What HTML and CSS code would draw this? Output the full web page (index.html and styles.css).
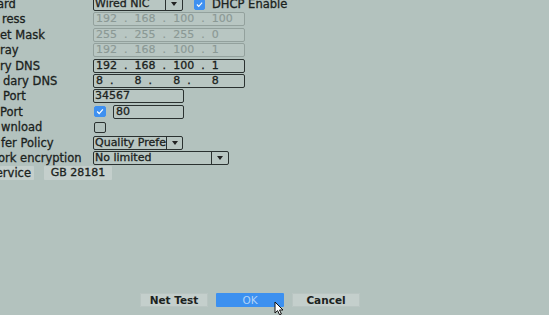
FILE: index.html
```html
<!DOCTYPE html>
<html>
<head>
<meta charset="utf-8">
<link rel="stylesheet" href="styles.css">
</head>
<body>
<div class="screen">
  <div class="form">
    <div class="row">
      <div class="label"><span class="lt off-3">ard</span></div>
      <div class="field">
        <div class="select w-nic"><span class="sel-text">Wired NIC</span><span class="sel-arrow"></span></div>
        <span class="check on dhcp"><svg viewBox="0 0 12 11"><path d="M2.5 5.5 L5 8 L9.5 3" /></svg></span>
        <span class="check-label">DHCP Enable</span>
      </div>
    </div>
    <div class="row">
      <div class="label"><span class="lt off2">ress</span></div>
      <div class="field">
        <div class="ip disabled"><span class="seg">192<i>.</i></span><span class="seg">168<i>.</i></span><span class="seg">100<i>.</i></span><span class="seg">100</span></div>
      </div>
    </div>
    <div class="row">
      <div class="label"><span class="lt">et Mask</span></div>
      <div class="field">
        <div class="ip disabled"><span class="seg">255<i>.</i></span><span class="seg">255<i>.</i></span><span class="seg">255<i>.</i></span><span class="seg">0</span></div>
      </div>
    </div>
    <div class="row">
      <div class="label"><span class="lt">ray</span></div>
      <div class="field">
        <div class="ip disabled"><span class="seg">192<i>.</i></span><span class="seg">168<i>.</i></span><span class="seg">100<i>.</i></span><span class="seg">1</span></div>
      </div>
    </div>
    <div class="row">
      <div class="label"><span class="lt">ry DNS</span></div>
      <div class="field">
        <div class="ip"><span class="seg">192<i>.</i></span><span class="seg">168<i>.</i></span><span class="seg">100<i>.</i></span><span class="seg">1</span></div>
      </div>
    </div>
    <div class="row">
      <div class="label"><span class="lt off3">dary DNS</span></div>
      <div class="field">
        <div class="ip"><span class="seg">8<i>.</i></span><span class="seg">8<i>.</i></span><span class="seg">8<i>.</i></span><span class="seg">8</span></div>
      </div>
    </div>
    <div class="row">
      <div class="label"><span class="lt off3">Port</span></div>
      <div class="field">
        <div class="input w-tcp">34567</div>
      </div>
    </div>
    <div class="row">
      <div class="label"><span class="lt">Port</span></div>
      <div class="field">
        <span class="check on"><svg viewBox="0 0 12 11"><path d="M2.5 5.5 L5 8 L9.5 3" /></svg></span>
        <div class="input w-http">80</div>
      </div>
    </div>
    <div class="row">
      <div class="label"><span class="lt off1">wnload</span></div>
      <div class="field">
        <span class="check"></span>
      </div>
    </div>
    <div class="row">
      <div class="label"><span class="lt off1">fer Policy</span></div>
      <div class="field">
        <div class="select w-policy"><span class="sel-text">Quality Preferred</span><span class="sel-arrow"></span></div>
      </div>
    </div>
    <div class="row">
      <div class="label"><span class="lt off-2">ork encryption</span></div>
      <div class="field">
        <div class="select w-enc"><span class="sel-text">No limited</span><span class="sel-arrow"></span></div>
      </div>
    </div>
    <div class="row svc-row">
      <span class="btn svc"><span>ervice</span></span>
      <span class="btn gb">GB 28181</span>
    </div>
  </div>
  <div class="actions">
    <span class="btn act">Net Test</span>
    <span class="btn act primary">OK</span>
    <span class="btn act">Cancel</span>
  </div>
  <svg class="cursor" viewBox="0 0 11 15" width="11" height="15"><path d="M1 1 L1 12 L3.6 9.6 L5.6 13.8 L7.4 13 L5.5 9 L9 9 Z" /></svg>
</div>
</body>
</html>
```
FILE: styles.css
```css
html, body {
  margin: 0;
  padding: 0;
}
body {
  background: #b3c2be;
  font-family: "DejaVu Sans", sans-serif;
  font-size: 11px;
  color: #1b2220;
  overflow: hidden;
  -webkit-text-stroke: 0.3px currentColor;
}
.screen {
  position: relative;
  width: 549px;
  height: 315px;
  overflow: hidden;
}
.form {
  display: flex;
  flex-direction: column;
  margin-top: -3.6px;
}
.row {
  display: flex;
  align-items: center;
  height: 15.4px;
}
.label {
  width: 93px;
  flex: none;
  white-space: nowrap;
  font-size: 11.5px;
  line-height: 14px;
}
.lt { display: inline-block; }
.off-3 { margin-left: -3px; }
.off-2 { margin-left: -2px; }
.off1 { margin-left: 1px; }
.off2 { margin-left: 2px; }
.off3 { margin-left: 3px; }
.field {
  display: flex;
  align-items: center;
}
.ip, .input, .select {
  box-sizing: border-box;
  height: 14px;
  border: 1px solid #2a3130;
  border-radius: 2px;
  background: #b8c6c2;
  line-height: 12px;
  white-space: nowrap;
}
.ip {
  width: 152px;
  display: flex;
  padding-left: 2px;
}
.ip .seg {
  width: 38.6px;
  flex: none;
}
.ip .seg:last-child { width: auto; }
.ip i {
  font-style: normal;
  margin-left: 7px;
}
.ip.disabled {
  border-color: #93a19d;
  color: #8b9995;
  -webkit-text-stroke: 0.15px currentColor;
}
.input {
  padding-left: 1px;
}
.w-tcp { width: 91px; }
.w-http { width: 71px; margin-left: 7px; padding-left: 2px; }
.select {
  display: flex;
  overflow: hidden;
}
.sel-text {
  flex: 1;
  overflow: hidden;
  padding-left: 1px;
}
.sel-arrow {
  flex: none;
  width: 16px;
  border-left: 1px solid #2a3130;
  display: flex;
  align-items: center;
  justify-content: center;
}
.sel-arrow::after {
  content: "";
  border-left: 3px solid transparent;
  border-right: 3px solid transparent;
  border-top: 4px solid #222;
}
.w-nic { width: 90px; }
.w-policy { width: 90px; }
.w-policy .sel-arrow { width: 15px; }
.w-enc { width: 136px; }
.check {
  box-sizing: border-box;
  width: 12px;
  height: 11px;
  border: 1px solid #2a3130;
  border-radius: 2px;
  margin-left: 1px;
  flex: none;
  display: flex;
}
.check.on {
  background: #3e90f0;
  border-color: #3e90f0;
}
.check svg {
  width: 100%;
  height: 100%;
  fill: none;
  stroke: #ffffff;
  stroke-width: 1.5;
}
.check.dhcp {
  width: 11px;
  margin-left: 11px;
}
.check-label {
  margin-left: 7px;
  font-size: 11.5px;
}
.btn {
  box-sizing: border-box;
  height: 14px;
  line-height: 14px;
  background: #c4cfcc;
  border-radius: 1px;
  text-align: center;
  white-space: nowrap;
  flex: none;
}
.svc-row {
  gap: 10px;
}
.svc {
  width: 34px;
  display: flex;
  justify-content: flex-end;
  overflow: hidden;
  padding-right: 3px;
  font-size: 11.5px;
}
.gb {
  width: 68px;
}
.actions {
  display: flex;
  gap: 8px;
  margin-top: 112px;
  padding-left: 140px;
}
.act {
  width: 68px;
  font-weight: bold;
  font-size: 10.5px;
  -webkit-text-stroke: 0;
  box-shadow: inset 0 0 0 1px #b9c5c2;
}
.act.primary {
  background: #3c90f0;
  color: #b2d3f8;
  box-shadow: none;
  font-weight: normal;
}
.cursor {
  position: absolute;
  left: 274px;
  top: 301px;
}
.cursor path {
  fill: #ffffff;
  stroke: #111;
  stroke-width: 1;
  stroke-linejoin: round;
}
```
